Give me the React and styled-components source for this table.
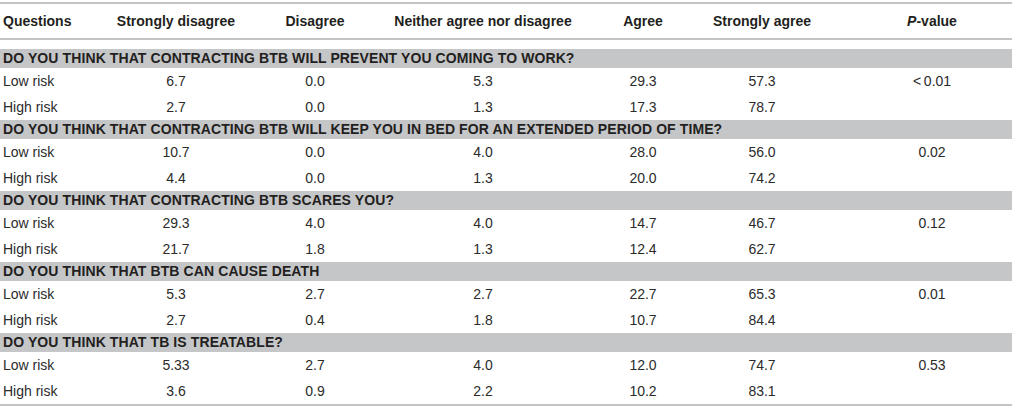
import React from "react";
import styled, { createGlobalStyle } from "styled-components";

const Global = createGlobalStyle`
  html, body { margin: 0; padding: 0; background: #ffffff; }
  body { font-family: "Liberation Sans", Arial, Helvetica, sans-serif; color: #231f20; }
`;

const COLS = "106px 140px 138px 198px 122px 116px 192px";

const Table = styled.div`
  width: 1012px;
  margin-top: 2px;
  border-bottom: 2px solid #c4c4c4;
`;

const HeadRow = styled.div`
  display: grid;
  grid-template-columns: ${COLS};
  height: 34px;
  align-items: center;
  border-top: 2px solid #c4c4c4;
  border-bottom: 2px solid #c4c4c4;
  margin-bottom: 9px;
`;

const HeadCell = styled.div`
  font-size: 14px;
  font-weight: 700;
  text-align: ${(p) => (p.$left ? "left" : "center")};
  padding-left: ${(p) => (p.$left ? "3px" : p.$shift ? `${p.$shift}px` : "0")};
  white-space: nowrap;
`;

const Band = styled.div`
  height: 19px;
  line-height: 19px;
  background: #c5c6c8;
  font-size: 14px;
  font-weight: 700;
  letter-spacing: 0.1px;
  padding-left: 3px;
  white-space: nowrap;
`;

const Row = styled.div`
  display: grid;
  grid-template-columns: ${COLS};
  height: 26px;
  align-items: center;
`;

const Cell = styled.div`
  font-size: 14px;
  color: #2b2b2b;
  text-align: ${(p) => (p.$left ? "left" : "center")};
  padding-left: ${(p) => (p.$left ? "3px" : p.$shift ? `${p.$shift}px` : "0")};
  white-space: nowrap;
`;

const headers = [
  "Strongly disagree",
  "Disagree",
  "Neither agree nor disagree",
  "Agree",
  "Strongly agree",
];

const groups = [
  {
    q: "DO YOU THINK THAT CONTRACTING BTB WILL PREVENT YOU COMING TO WORK?",
    p: "<\u20090.01",
    low: ["6.7", "0.0", "5.3", "29.3", "57.3"],
    high: ["2.7", "0.0", "1.3", "17.3", "78.7"],
  },
  {
    q: "DO YOU THINK THAT CONTRACTING BTB WILL KEEP YOU IN BED FOR AN EXTENDED PERIOD OF TIME?",
    p: "0.02",
    low: ["10.7", "0.0", "4.0", "28.0", "56.0"],
    high: ["4.4", "0.0", "1.3", "20.0", "74.2"],
  },
  {
    q: "DO YOU THINK THAT CONTRACTING BTB SCARES YOU?",
    p: "0.12",
    low: ["29.3", "4.0", "4.0", "14.7", "46.7"],
    high: ["21.7", "1.8", "1.3", "12.4", "62.7"],
  },
  {
    q: "DO YOU THINK THAT BTB CAN CAUSE DEATH",
    p: "0.01",
    low: ["5.3", "2.7", "2.7", "22.7", "65.3"],
    high: ["2.7", "0.4", "1.8", "10.7", "84.4"],
  },
  {
    q: "DO YOU THINK THAT TB IS TREATABLE?",
    p: "0.53",
    low: ["5.33", "2.7", "4.0", "12.0", "74.7"],
    high: ["3.6", "0.9", "2.2", "10.2", "83.1"],
  },
];

const DataRow = ({ label, values, p }) => (
  <Row>
    <Cell $left>{label}</Cell>
    {values.map((v, i) => (
      <Cell key={i}>{v}</Cell>
    ))}
    <Cell $shift={32}>{p}</Cell>
  </Row>
);

export default function App() {
  return (
    <>
      <Global />
      <Table>
        <HeadRow>
          <HeadCell $left>Questions</HeadCell>
          {headers.map((h) => (
            <HeadCell key={h}>{h}</HeadCell>
          ))}
          <HeadCell $shift={32}>
            <i>P</i>-value
          </HeadCell>
        </HeadRow>
        {groups.map((g) => (
          <React.Fragment key={g.q}>
            <Band>{g.q}</Band>
            <DataRow label="Low risk" values={g.low} p={g.p} />
            <DataRow label="High risk" values={g.high} p="" />
          </React.Fragment>
        ))}
      </Table>
    </>
  );
}
